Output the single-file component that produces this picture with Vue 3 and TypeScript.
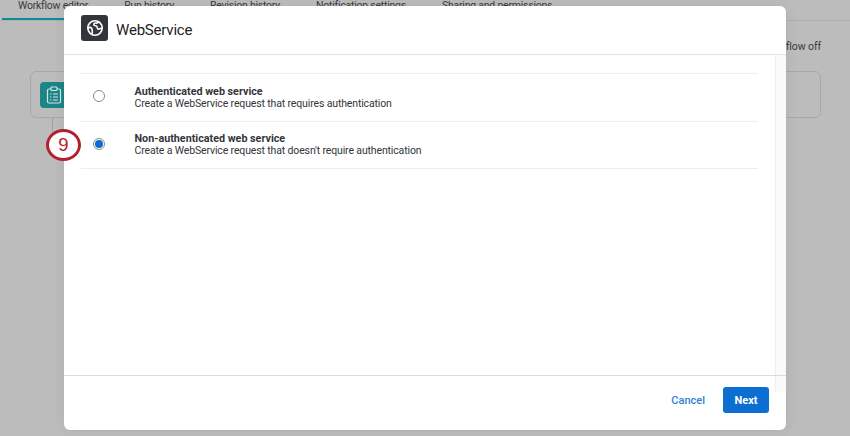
<script setup lang="ts">
interface Option { title: string; desc: string; checked: boolean }
const options: Option[] = [
  { title: 'Authenticated web service', desc: 'Create a WebService request that requires authentication', checked: false },
  { title: 'Non-authenticated web service', desc: "Create a WebService request that doesn't require authentication", checked: true },
]
const tabs = ['Workflow editor', 'Run history', 'Revision history', 'Notification settings', 'Sharing and permissions']
</script>

<template>
  <div class="page">
    <div class="backdrop">
      <nav class="tabs">
        <span v-for="(t, i) in tabs" :key="t" class="tab" :class="{ active: i === 0 }">{{ t }}</span>
      </nav>
      <div class="status">Workflow off</div>
      <div class="card">
        <div class="card-icon">
          <svg width="16" height="18" viewBox="0 0 16 18" fill="none" stroke="#d5e6e6" stroke-width="1.2">
            <rect x="1.5" y="3" width="13" height="14" rx="1.5" />
            <rect x="5" y="1" width="6" height="3.5" rx="1" fill="#1c8586" />
            <path d="M4 8h1.4M4 11h1.4M4 14h1.4M7 8h5M7 11h5M7 14h5" />
          </svg>
        </div>
      </div>
      <div class="connector"></div>
    </div>

    <section class="modal">
      <div class="track"></div>
      <header class="modal-head">
        <div class="logo">
          <svg width="18" height="18" viewBox="0 0 18 18" fill="none" stroke="#fff" stroke-width="1.6" stroke-linecap="round" stroke-linejoin="round">
            <circle cx="9" cy="9" r="7.2" />
            <path d="M2 9.200c1.400-1 2.900-.8 3.700.3.700 1 .3 2 .6 3 .3.900 0 1.700-.6 2.300" />
            <path d="M12.800 3c-.9 1-2 1.200-3 1-1.100-.1-2 .5-2 1.400 0 1 .9 1.300 1.800 1.400 1.200.1 1.700.9 1.700 1.900 0 1.300 1.200 1.800 2.200 1.200.8-.5 1.400-.7 2.300-.5" />
          </svg>
        </div>
        <h1 class="modal-title">WebService</h1>
      </header>

      <div class="modal-body">
        <div class="options">
          <label v-for="o in options" :key="o.title" class="option">
            <span class="radio" :class="{ on: o.checked }"></span>
            <span class="text">
              <strong>{{ o.title }}</strong>
              <span>{{ o.desc }}</span>
            </span>
          </label>
        </div>
      </div>

      <footer class="modal-foot">
        <button class="cancel" type="button">Cancel</button>
        <button class="next" type="button">Next</button>
      </footer>
    </section>

    <div class="step">9</div>
  </div>
</template>

<style>
html, body { margin: 0; padding: 0; background: #bcbcbc; overflow: hidden; }
</style>

<style scoped>
.page {
  position: relative;
  width: 850px;
  height: 436px;
  overflow: hidden;
  background: #bcbcbc;
  font-family: "Roboto", "Liberation Sans", sans-serif;
  color: #32363a;
}
.backdrop { display: flex; flex-direction: column; height: 100%; }
.tabs {
  display: flex;
  flex: none;
  height: 20px;
  padding-left: 2px;
  border-bottom: 1px solid #b0b0b0;
}
.tab {
  padding: 0 16px;
  margin-right: 4px;
  font-size: 10.500px;
  letter-spacing: -0.23px;
  line-height: 12px;
  color: #3a3a3a;
  white-space: nowrap;
}
.tab.active { border-bottom: 2px solid #0f8a98; height: 20px; box-sizing: border-box; }
.status {
  align-self: flex-end;
  margin: 19px 29px 0 0;
  font-size: 10.500px;
  letter-spacing: -0.1px;
  line-height: 14px;
  color: #3a3a3a;
}
.card {
  flex: none;
  margin: 17px 29px 0 30px;
  height: 45px;
  border: 1px solid #a8a8a8;
  border-radius: 6px;
  display: flex;
  align-items: center;
  padding-left: 9px;
}
.card-icon {
  width: 28px;
  height: 26px;
  border-radius: 4px;
  background: #1c8586;
  display: flex;
  align-items: center;
  justify-content: center;
}
.connector { width: 1px; height: 14px; margin-left: 52px; background: #a0a0a0; }

.modal {
  position: absolute;
  left: 64px;
  top: 6px;
  width: 722px;
  height: 424px;
  background: #fff;
  border-radius: 6px;
  display: flex;
  flex-direction: column;
  overflow: hidden;
  box-shadow: 0 0 14px rgba(0, 0, 0, 0.07);
}
.track {
  position: absolute;
  right: 0;
  top: 49px;
  width: 10px;
  height: 337px;
  background: #fafafa;
  border-left: 1px solid #eeeeee;
}
.modal-head {
  flex: none;
  display: flex;
  align-items: flex-start;
  gap: 8px;
  padding: 9px 0 0 17px;
  border-bottom: 1px solid #e3e3e3;
  height: 39px;
}
.logo {
  width: 27px;
  height: 26px;
  border-radius: 3px;
  background: #32363a;
  display: flex;
  align-items: center;
  justify-content: center;
}
.modal-title { margin: 5px 0 0; font-size: 15px; letter-spacing: -0.2px; line-height: 20px; font-weight: 400; color: #1f2226; }
.modal-body {
  flex: 1;
  min-height: 0;
  padding: 18px 28px 0 17px;
  border-bottom: 1px solid #dcdcdc;
  position: relative;
}
.options { border-top: 1px solid #eeeeee; }
.option {
  display: flex;
  align-items: center;
  height: 46.500px;
  border-bottom: 1px solid #eeeeee;
}
.radio {
  flex: none;
  width: 10px;
  height: 10px;
  margin: -2px 29.500px 0 12px;
  border: 1px solid #8a8a8a;
  border-radius: 50%;
  background: #fff;
  position: relative;
}
.radio.on::after {
  content: "";
  position: absolute;
  inset: 1px;
  border-radius: 50%;
  background: #0b6ed0;
}
.text { display: flex; flex-direction: column; margin-top: 1px; font-size: 10.500px; letter-spacing: -0.14px; line-height: 12px; color: #32363a; }
.text strong { font-weight: 700; font-size: 10.750px; letter-spacing: 0; }
.modal-foot {
  flex: none;
  height: 54px;
  display: flex;
  align-items: center;
  justify-content: flex-end;
  gap: 18px;
  padding: 0 17px 6px 0;
  box-sizing: border-box;
  position: relative;
}
button { font-family: inherit; font-size: 11px; font-weight: 500; border-radius: 3px; border: none; }
.cancel { background: none; color: #2f7fd6; padding: 0; }
.next { width: 46px; height: 26px; background: #0b6ed0; color: #fff; padding: 0; font-weight: 700; }

.step {
  position: absolute;
  left: 46px;
  top: 129px;
  width: 29px;
  height: 26px;
  border: 3px solid #b2202e;
  border-radius: 50%;
  background: #fff;
  color: #b2202e;
  font-size: 18.500px;
  line-height: 26px;
  text-align: center;
  font-family: "Liberation Sans", sans-serif;
}
</style>
